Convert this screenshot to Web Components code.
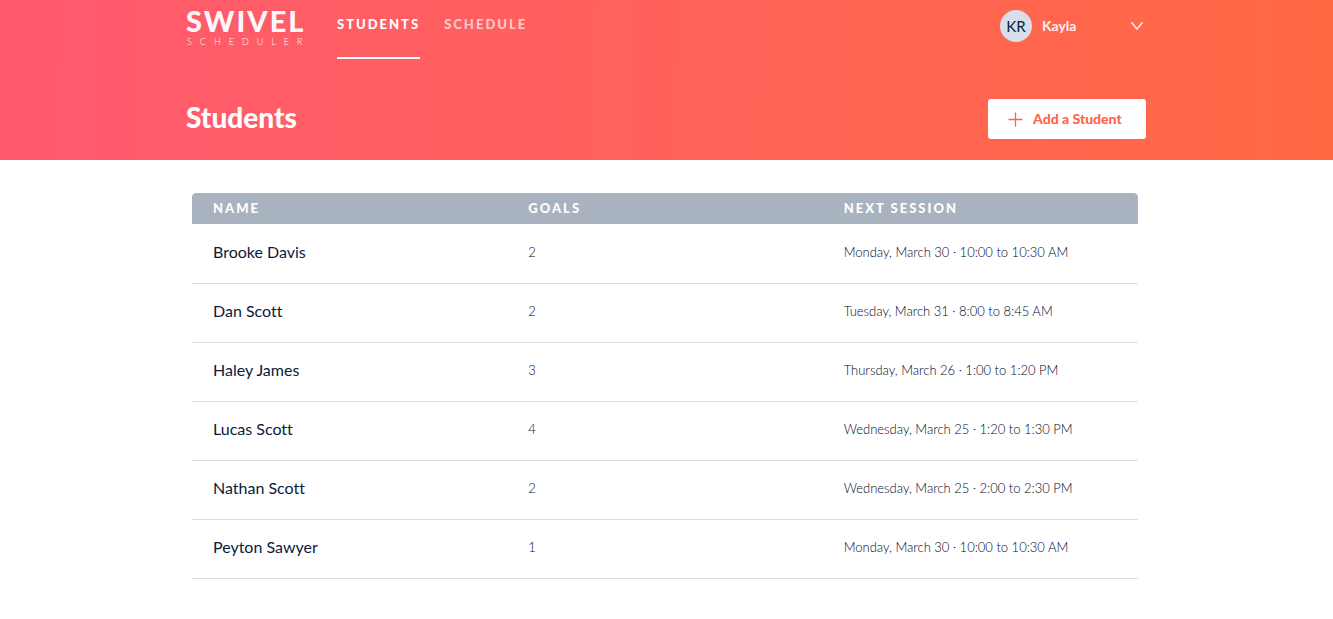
<!DOCTYPE html>
<html lang="en">
<head>
<meta charset="utf-8">
<meta name="viewport" content="width=device-width, initial-scale=1">
<title>Swivel Scheduler – Students</title>
<style>
  body { margin: 0; background: #fff; color: #0b1b3b; font: 13px/20px Lato, "Open Sans", sans-serif; font-variant-ligatures: none; }
</style>
</head>
<body>
<swivel-app></swivel-app>

<template id="t-app">
  <style>
    :host { display: block; }
    header { background: linear-gradient(91deg, #ff5970, #ff615c 45%, #ff6a44); padding-bottom: 21px; }
    .wrap { max-width: 961px; margin: 0 auto; padding-right: 1px; box-sizing: border-box; }
    .bar { display: flex; align-items: flex-start; height: 59px; }
    nav { display: flex; gap: 24px; margin-left: 32px; flex: 1; }
    .head { display: flex; align-items: flex-start; justify-content: space-between; padding-top: 40px; }
    h1 { margin: 0; color: #fff; font-size: 28px; line-height: 36px; font-weight: 900; }
    main.wrap { padding: 33px 9px 40px 6px; }
  </style>
  <header>
    <div class="wrap">
      <div class="bar">
        <swivel-logo></swivel-logo>
        <nav aria-label="Main">
          <nav-link href="#students" current>Students</nav-link>
          <nav-link href="#schedule">Schedule</nav-link>
        </nav>
        <user-menu initials="KR">Kayla</user-menu>
      </div>
      <div class="head">
        <h1>Students</h1>
        <add-button>Add a Student</add-button>
      </div>
    </div>
  </header>
  <main class="wrap"><student-table></student-table></main>
</template>

<template id="t-logo">
  <style>
    :host { display: block; width: 119px; color: #fbf7fc; }
    a { display: block; color: inherit; text-decoration: none; white-space: nowrap; }
    .big { display: block; font-size: 29px; line-height: 28px; padding-top: 7px; font-weight: 900; letter-spacing: 2px; }
    .small { display: block; padding: 2px 0 0 1px; font-size: 9px; line-height: 10px; font-weight: 300; letter-spacing: 8px; }
  </style>
  <a href="#home"><span class="big">SWIVEL</span><span class="small">SCHEDULER</span></a>
</template>

<template id="t-nav-link">
  <style>
    :host { display: block; }
    a { display: block; box-sizing: border-box; height: 59px; padding-top: 14px; border-bottom: 2px solid transparent; color: #fff; text-decoration: none; text-transform: uppercase; font-size: 13px; line-height: 20px; font-weight: 900; letter-spacing: 2px; }
    a span { opacity: .65; }
    :host([current]) a { border-color: #fff; }
    :host([current]) span { opacity: 1; }
  </style>
  <a><span><slot></slot></span></a>
</template>

<template id="t-user-menu">
  <style>
    :host { display: block; width: 146px; padding-top: 10px; }
    button { display: flex; align-items: center; width: 100%; height: 32px; padding: 0; border: 0; background: none; color: #fdeef0; font: inherit; font-size: 14px; font-weight: 700; cursor: pointer; }
    .avatar { width: 32px; line-height: 32px; border-radius: 50%; background: #d8dfe8; color: #0b1b3b; font-size: 15px; font-weight: 400; }
    .name { flex: 1; margin-left: 10px; text-align: left; }
    svg { margin-right: 3px; }
  </style>
  <button type="button" aria-haspopup="true">
    <span class="avatar"></span>
    <span class="name"><slot></slot></span>
    <svg width="12" height="8" viewBox="0 0 12 8" fill="none" stroke="currentColor" stroke-width="1.5" stroke-linecap="round" aria-hidden="true"><path d="M.8.8 6 7 11.2.8"/></svg>
  </button>
</template>

<template id="t-add-button">
  <style>
    :host { display: block; }
    button { display: flex; align-items: center; gap: 10px; min-width: 158px; height: 40px; padding: 0 20px; border: 0; border-radius: 3px; background: #fff; color: #ff6549; font: inherit; font-size: 14px; font-weight: 900; white-space: nowrap; cursor: pointer; }
    svg { flex: none; }
  </style>
  <button type="button">
    <svg width="15" height="15" viewBox="0 0 15 15" stroke="currentColor" stroke-width="1.3" stroke-linecap="round" aria-hidden="true"><path d="M7.5 1v13M1 7.5h13"/></svg>
    <span><slot></slot></span>
  </button>
</template>

<template id="t-table">
  <style>
    :host { display: block; }
    table { width: 100%; table-layout: fixed; border-collapse: separate; border-spacing: 0; text-align: left; }
    th, td { padding: 0 21px; }
    thead th { height: 29px; padding-bottom: 2px; background: #a9b3bf; background-clip: padding-box; border-bottom: 1px solid transparent; color: #fff; font-size: 13px; line-height: 20px; font-weight: 900; letter-spacing: 2px; text-transform: uppercase; }
    thead th:first-child { border-top-left-radius: 4px; }
    thead th:last-child { border-top-right-radius: 4px; }
    tbody th, tbody td { height: 54px; padding-bottom: 4px; border-bottom: 1px solid #dadfe5; white-space: nowrap; }
    tbody th { font-size: 16px; line-height: 24px; font-weight: 400; }
    tbody td { color: #00082b; font-weight: 300; }
  </style>
  <table>
    <thead><tr><th scope="col">Name</th><th scope="col">Goals</th><th scope="col">Next session</th></tr></thead>
    <tbody></tbody>
  </table>
</template>

<script>
  class Base extends HTMLElement {
    constructor() {
      super();
      const tpl = document.getElementById(this.constructor.template);
      this.attachShadow({ mode: "open" }).append(document.importNode(tpl.content, true));
    }
  }

  customElements.define("swivel-logo", class extends Base { static template = "t-logo"; });

  customElements.define("nav-link", class extends Base {
    static template = "t-nav-link";
    connectedCallback() {
      const a = this.shadowRoot.querySelector("a");
      a.href = this.getAttribute("href");
      if (this.hasAttribute("current")) a.setAttribute("aria-current", "page");
    }
  });

  customElements.define("user-menu", class extends Base {
    static template = "t-user-menu";
    connectedCallback() {
      this.shadowRoot.querySelector(".avatar").textContent = this.getAttribute("initials");
    }
  });

  customElements.define("add-button", class extends Base { static template = "t-add-button"; });

  const students = [
    ["Brooke Davis", 2, "Monday, March 30 · 10:00 to 10:30 AM"],
    ["Dan Scott", 2, "Tuesday, March 31 · 8:00 to 8:45 AM"],
    ["Haley James", 3, "Thursday, March 26 · 1:00 to 1:20 PM"],
    ["Lucas Scott", 4, "Wednesday, March 25 · 1:20 to 1:30 PM"],
    ["Nathan Scott", 2, "Wednesday, March 25 · 2:00 to 2:30 PM"],
    ["Peyton Sawyer", 1, "Monday, March 30 · 10:00 to 10:30 AM"]
  ];

  customElements.define("student-table", class extends Base {
    static template = "t-table";
    connectedCallback() {
      const body = this.shadowRoot.querySelector("tbody");
      body.replaceChildren();
      for (const [name, goals, session] of students) {
        const row = body.insertRow();
        const th = document.createElement("th");
        th.scope = "row";
        th.textContent = name;
        row.append(th);
        row.insertCell().textContent = goals;
        row.insertCell().textContent = session;
      }
    }
  });

  customElements.define("swivel-app", class extends Base { static template = "t-app"; });
</script>
</body>
</html>
